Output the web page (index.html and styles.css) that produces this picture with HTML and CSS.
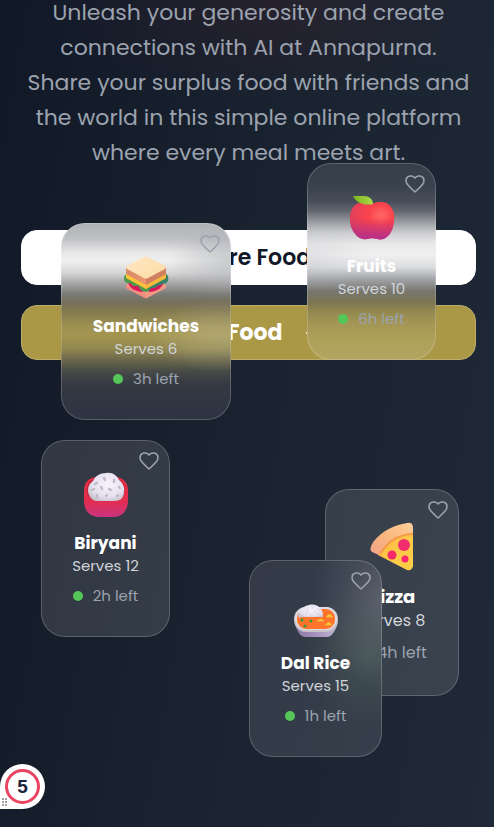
FILE: index.html
```html
<!DOCTYPE html>
<html lang="en">
<head>
<meta charset="utf-8">
<meta name="viewport" content="width=device-width, initial-scale=1">
<title>Annapurna</title>
<link rel="stylesheet" href="styles.css">
</head>
<body>
<svg class="defs" width="0" height="0" aria-hidden="true">
  <defs>
    <symbol id="heart" viewBox="0 0 20 18"><path d="M10 17C8 15.200 5 12.400 2.700 9.800C.5 7.200 .4 3.700 2.600 2C4.800.200 8.300.800 10 3C11.700.800 15.200.200 17.400 2C19.600 3.700 19.500 7.200 17.300 9.800C15 12.400 12 15.200 10 17Z" fill="none" stroke="currentColor" stroke-width="1.600" stroke-linejoin="round"/></symbol>
    <linearGradient id="bread" x1="0" y1="0" x2="1" y2="1"><stop offset="0" stop-color="#ffe6c4"/><stop offset="1" stop-color="#fbdda4"/></linearGradient>
    <linearGradient id="crustL"><stop stop-color="#d68a68"/><stop offset="1" stop-color="#ef9670"/></linearGradient>
    <radialGradient id="apple" cx=".7" cy=".35" r=".8"><stop stop-color="#ff6965"/><stop offset=".35" stop-color="#fb434c"/><stop offset="1" stop-color="#dc3f5d"/></radialGradient>
    <linearGradient id="appleBase" x1="0" y1="0" x2="0" y2="1"><stop offset=".45" stop-color="#b52f8b" stop-opacity="0"/><stop offset="1" stop-color="#b52f8b"/></linearGradient>
    <linearGradient id="leaf"><stop stop-color="#78b51e"/><stop offset="1" stop-color="#b0da4b"/></linearGradient>
    <linearGradient id="bowl" x1="0" y1="0" x2="0" y2="1"><stop stop-color="#e82c43"/><stop offset=".6" stop-color="#e22d50"/><stop offset="1" stop-color="#c9347f"/></linearGradient>
    <radialGradient id="rice" cx=".55" cy=".4" r=".65"><stop stop-color="#f7f3fb"/><stop offset=".7" stop-color="#e6dff0"/><stop offset="1" stop-color="#c6c0ca"/></radialGradient>
    <linearGradient id="cheese" x1="0" y1="0" x2="1" y2="1"><stop stop-color="#ffae3f"/><stop offset=".5" stop-color="#fdc84a"/><stop offset="1" stop-color="#ffcf45"/></linearGradient>
    <linearGradient id="crust" x1="0" y1="1" x2="1" y2="0"><stop stop-color="#f2a28a"/><stop offset=".5" stop-color="#f9b87e"/><stop offset="1" stop-color="#ffcf9a"/></linearGradient>
    <linearGradient id="tray" x1="0" y1="0" x2="1" y2="0"><stop stop-color="#8978a4"/><stop offset=".5" stop-color="#a593bd"/><stop offset="1" stop-color="#c2b7d0"/></linearGradient>
  </defs>
</svg>

<main class="page">
  <section class="hero">
    <p class="intro">Unleash your generosity and create<br>connections with AI at Annapurna.<br>Share your surplus food with friends and<br>the world in this simple online platform<br>where every meal meets art.</p>
    <div class="actions">
      <button class="btn btn-share" type="button">Share Food</button>
      <button class="btn btn-find" type="button">Find Food
        <svg width="20" height="20" viewBox="0 0 20 20" fill="none" stroke="currentColor" stroke-width="2" stroke-linecap="round" stroke-linejoin="round" aria-hidden="true"><path d="M5 10H18M11 3l7 7-7 7"/></svg>
      </button>
    </div>
  </section>

  <article class="card sandwiches">
    <button class="like" type="button" aria-label="Like Sandwiches"><svg width="20" height="18"><use href="#heart"/></svg></button>
    <svg class="food" width="48" height="48" viewBox="0 0 48 48" aria-hidden="true">
      <path d="M4 32L24 22L44 32V35L24 45.500L4 35Z" fill="#f19a83"/><path d="M4 32L24 41V45.500L4 35Z" fill="#f28e7e"/>
      <path d="M6 29C7 35 13 38 20 39L24 37L28 39C36 38 41 34 42 28Z" fill="#d7165b"/>
      <path d="M3 22C1 25 2 29 5 30C8 29 9 31 11 33C14 34 16 32 17 34C18 38 23 40 27 38C29 33 32 36 34 34C36 31 40 32 44 30C47 28 47 23 44 21L24 29Z" fill="#4d9a4b"/>
      <path d="M25 32L44 21C47 23 47 28 44 30C40 32 36 31 34 34C32 36 29 33 27 38Z" fill="#38816a"/>
      <path d="M4 19V25L24 36L44 25V19Z" fill="#fcc438"/><path d="M24 31L44 20V25L24 36Z" fill="#f7b83d"/>
      <path d="M4 14V21L24 32V24Z" fill="url(#crustL)"/><path d="M44 14V21L24 32V24Z" fill="#d08061"/>
      <path d="M22 4Q24 3 26 4L43 13Q45 14 43 16L26 25Q24 26 22 25L5 16Q3 14 5 13Z" fill="url(#bread)"/>
    </svg>
    <h2>Sandwiches</h2><p class="serves">Serves 6</p><p class="time"><i></i>3h left</p>
  </article>

  <article class="card fruits">
    <button class="like" type="button" aria-label="Like Fruits"><svg width="20" height="18"><use href="#heart"/></svg></button>
    <svg class="food" width="48" height="48" viewBox="0 0 48 48" aria-hidden="true">
      <path d="M24 11C18 7 10 9 6 13C1 18 1 30 4 36C8 44 13 47 19 46C23 45 25 45 29 46C37 48 43 42 45 34C48 24 46 15 40 11C35 8 28 9 24 11Z" fill="url(#apple)"/>
      <path d="M24 11C18 7 10 9 6 13C1 18 1 30 4 36C8 44 13 47 19 46C23 45 25 45 29 46C37 48 43 42 45 34C48 24 46 15 40 11C35 8 28 9 24 11Z" fill="url(#appleBase)"/>
      <path d="M5 3H16C21 3 25 6 25 11C17 13 8 10 5 3Z" fill="url(#leaf)"/>
    </svg>
    <h2>Fruits</h2><p class="serves">Serves 10</p><p class="time"><i></i>6h left</p>
  </article>

  <article class="card biryani">
    <button class="like" type="button" aria-label="Like Biryani"><svg width="20" height="18"><use href="#heart"/></svg></button>
    <svg class="food" width="48" height="48" viewBox="0 0 48 48" aria-hidden="true">
      <path d="M2 21C2 13 6 8 14 7H34C42 8 46 13 46 21V30C46 41 40 47 31 47H17C7 47 2 40 2 30Z" fill="url(#bowl)"/>
      <path d="M5 20C5 13 9 9 15 8V30C8 30 5 26 5 20ZM43 20C43 13 39 9 33 8V30C40 30 43 26 43 20Z" fill="#bd2838"/>
      <path d="M6 20C6 16 8 13 11 11C13 6 18 3 24 3C31 2 35 6 37 10C41 13 43 18 42 22C42 27 39 31 33 31H15C10 31 6 26 6 20Z" fill="url(#rice)"/>
      <path d="M22 8l1 2M32 10v2M15 13l-2 1M12 19l-2 1M19 17l1 2M27 19l2 1M37 17l1 1M15 27v-2M24 26l1-1M35 26l1-1" stroke="#c0bbc2" stroke-width="2.400" stroke-linecap="round"/>
    </svg>
    <h2>Biryani</h2><p class="serves">Serves 12</p><p class="time"><i></i>2h left</p>
  </article>

  <article class="card pizza">
    <button class="like" type="button" aria-label="Like Pizza"><svg width="20" height="18"><use href="#heart"/></svg></button>
    <svg class="food" width="50" height="50" viewBox="0 0 50 50" aria-hidden="true">
      <path d="M11 30C18 19 30 12 46 12V45Q45 50 40 49L11 34Z" fill="url(#cheese)"/>
      <path d="M5 31C2 29 4 24 7 20C15 10 27 4 40 2Q46 1 46 7V13C32 13 22 19 15 31L12 34Z" fill="url(#crust)"/>
      <path d="M13 33C22 19 31 14 46 13" fill="none" stroke="#f79949" stroke-width="2"/>
      <circle cx="37" cy="24" r="6" fill="#ef2c6c"/><circle cx="25" cy="34" r="4.500" fill="#f5286b"/><circle cx="38" cy="38" r="3.500" fill="#fa2471"/>
    </svg>
    <h2>Pizza</h2><p class="serves">Serves 8</p><p class="time"><i></i>4h left</p>
  </article>

  <article class="card dal">
    <button class="like" type="button" aria-label="Like Dal Rice"><svg width="20" height="18"><use href="#heart"/></svg></button>
    <svg class="food" width="48" height="48" viewBox="0 -7 48 48" aria-hidden="true">
      <path d="M3 25C4 34 9 40 13 40H35C40 40 44 33 46 25Z" fill="url(#tray)"/>
      <rect x="2" y="10" width="44" height="25" rx="12" fill="#c7c3c9"/><rect x="3" y="10" width="42" height="23" rx="11" fill="#e0dce3"/>
      <rect x="5" y="12" width="38" height="20" rx="9" fill="#ff742d"/>
      <path d="M6 19C6 14 11 9 17 8C25 6 32 12 31 20H10Q6 22 6 19Z" fill="url(#rice)"/>
      <path d="M15 12l1 1M20 11h1M23 14l1 1M14 16l1-1M18 17l1 1M26 17h1M26 12l1 1" stroke="#c4bdc7" stroke-width=".8" stroke-linecap="round"/>
      <circle cx="10" cy="23" r="1.500" fill="#329a3b"/><circle cx="19" cy="24" r="1.500" fill="#329a3b"/><circle cx="13" cy="29" r="1.500" fill="#329a3b"/>
      <path d="M34 20Q37 15 41 20ZM25 24Q29 20 32 24ZM33 28Q37 23 40 28Z" fill="#ffce42" stroke="#f7b030" stroke-width="1" stroke-linejoin="round"/>
    </svg>
    <h2>Dal Rice</h2><p class="serves">Serves 15</p><p class="time"><i></i>1h left</p>
  </article>
</main>

<button class="badge" type="button"><span>5</span>
  <svg width="6" height="9" viewBox="0 0 6 9" aria-hidden="true"><path d="M0 0h2v2H0zM3 0h2v2H3zM0 3h2v2H0zM3 3h2v2H3zM0 6h2v2H0zM3 6h2v2H3z" fill="#a5a5a5"/></svg>
</button>
</body>
</html>
```

FILE: styles.css
```css
* { box-sizing: border-box; }

body {
  margin: 0;
  background: #111827;
  font-family: Poppins, Inter, "Liberation Sans", sans-serif;
}

button { font: inherit; cursor: pointer; }
h2, p { margin: 0; }
.defs { position: absolute; }

.page {
  position: relative;
  min-height: 100vh;
  overflow: hidden;
  background:
    radial-gradient(ellipse 220px 90px at 55% 10px, rgba(90, 35, 40, 0.2), transparent),
    linear-gradient(100deg, #111827 0%, #1a2330 50%, #1f2937 100%);
}

.hero {
  margin-top: -5px;
  padding: 0 18px 0 21px;
}

.intro {
  color: #9ca3af;
  font-size: 22px;
  line-height: 35px;
  text-align: center;
}

.actions {
  display: flex;
  flex-direction: column;
  gap: 20px;
  margin-top: 60px;
}

.btn {
  display: flex;
  align-items: center;
  justify-content: center;
  gap: 20px;
  height: 55px;
  border: 1px solid #fff;
  border-radius: 16px;
  font-size: 22px;
  font-weight: 600;
}

.btn-share { background: #fff; color: #111827; }
.btn-find { background: #ab9846; border-color: #bcad6b; color: #fff; font-weight: 700; }

.card {
  position: absolute;
  display: flex;
  flex-direction: column;
  align-items: center;
  height: 197px;
  padding-top: 29px;
  border: 1px solid rgba(255, 255, 255, 0.2);
  border-radius: 24px;
  background: rgba(255, 255, 255, 0.12) border-box;
  white-space: nowrap;
}

/* Frosted glass: each tint is the softened colour of what lies under the card. */
.sandwiches {
  left: 61px;
  top: 223px;
  width: 170px;
  background:
    radial-gradient(ellipse 62px 40px at 100% 36px, rgba(165, 168, 173, 0.5), rgba(165, 168, 173, 0.3) 45%, transparent),
    radial-gradient(ellipse 70px 36px at 92% 112px, rgba(205, 200, 170, 0.35), rgba(205, 200, 170, 0.2) 45%, transparent),
    linear-gradient(#afb0b4 0, #c0c1c4 16px, #e8e8e9 30px, #f0f0f0 38px, #d5d5d6 50px, #a4a4a5 61px, #7c7b78 71px, #756f5c 79px, #82794f 88px, #9e9151 103px, #a39550 112px, #91874f 126px, #6b674c 137px, #494b48 148px, #343943 162px, #2e3442 187px);
  background-origin: border-box;
}

.fruits {
  left: 307px;
  top: 163px;
  width: 129px;
  background:
    radial-gradient(ellipse 60px 34px at 0 94px, rgba(190, 192, 196, 0.3), rgba(190, 192, 196, 0.15) 50%, transparent),
    linear-gradient(#363e4a 0, #3b424f 24px, #474d58 38px, #62666f 48px, #94979d 58px, #cccdd0 70px, #e9e9ea 81px, #f0f0f1 92px, #dcdde0 104px, #9fa0a4 117px, #77776f 128px, #7a7456 138px, #91874f 148px, #a39654 160px, #ae9f59 175px, #b3a561 197px);
  background-origin: border-box;
}

.biryani { left: 41px; top: 440px; width: 129px; }
.pizza { left: 325px; top: 489px; width: 134px; height: 207px; padding-top: 31px; }

.dal {
  left: 249px;
  top: 560px;
  width: 133px;
  background:
    radial-gradient(ellipse 76px 90px at 105% 38px, rgba(130, 132, 146, 0.5), rgba(130, 132, 146, 0.22) 50%, transparent),
    radial-gradient(ellipse 64px 70px at 90% 94px, rgba(90, 115, 98, 0.38), rgba(90, 115, 98, 0.18) 50%, transparent),
    linear-gradient(100deg, #333947, #363f4b);
  background-origin: border-box;
}

.like {
  position: absolute;
  top: 11px;
  right: 10px;
  display: flex;
  padding: 0;
  border: 0;
  background: none;
  color: #9ca3af;
}

.food { flex: none; }

.card h2 {
  margin-top: 11px;
  color: #fff;
  font-size: 17px;
  font-weight: 700;
  line-height: 28px;
}

.serves {
  color: #d1d5db;
  font-size: 15px;
  line-height: 18px;
}

.time {
  display: flex;
  align-items: center;
  gap: 10px;
  margin-top: 9px;
  color: #9ca3af;
  font-size: 15px;
  line-height: 24px;
}

.time i {
  width: 10px;
  height: 10px;
  border-radius: 50%;
  background: #55c759;
}

.card.pizza h2 { margin-top: 12px; font-size: 18px; }
.pizza .serves { font-size: 16px; line-height: 20px; }
.pizza .time { margin-top: 10px; font-size: 16px; }

.badge {
  position: fixed;
  left: 0;
  bottom: 18px;
  display: grid;
  place-items: center;
  width: 45px;
  height: 45px;
  padding: 0;
  border: 0;
  border-radius: 50% 50% 50% 0;
  background: #fff;
}

.badge span {
  display: grid;
  place-items: center;
  width: 35px;
  height: 35px;
  border: 3px solid #ea4560;
  border-radius: 50%;
  color: #1c2340;
  font-family: "Liberation Sans", sans-serif;
  font-size: 19px;
  font-weight: 700;
}

.badge svg { position: absolute; left: 2px; bottom: 2px; }
```
